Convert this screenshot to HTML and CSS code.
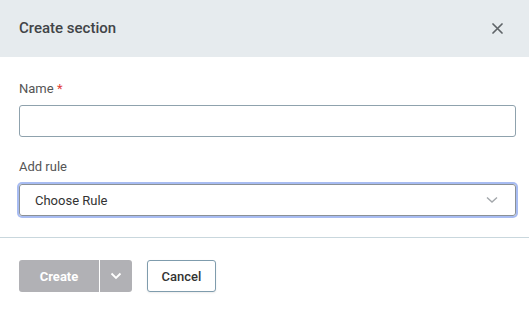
FILE: index.html
```html
<!DOCTYPE html>
<html lang="en">
<head>
    <meta charset="UTF-8">
    <meta name="viewport" content="width=device-width, initial-scale=1.0">
    <title>Create section</title>
    <link rel="stylesheet" href="styles.css">
</head>
<body>
    <div class="modal">
        <div class="modal-header">
            <h2>Create section</h2>
            <button class="close-btn" aria-label="Close">
                <svg width="11" height="11" viewBox="0 0 11 11">
                    <path d="M1 1L10 10M10 1L1 10" stroke="#5f6468" stroke-width="1.7" stroke-linecap="round"/>
                </svg>
            </button>
        </div>
        <div class="modal-body">
            <div class="field">
                <label>Name <span class="req">*</span></label>
                <input type="text" class="text-input">
            </div>
            <div class="field">
                <label>Add rule</label>
                <div class="select focused">
                    <span>Choose Rule</span>
                    <svg width="12" height="8" viewBox="0 0 12 8">
                        <path d="M1 1.5L6 6L11 1.5" fill="none" stroke="#a3a7ab" stroke-width="1.4"/>
                    </svg>
                </div>
            </div>
        </div>
        <div class="modal-footer">
            <div class="split-btn">
                <button class="btn-main">Create</button>
                <button class="btn-caret">
                    <svg width="12" height="8" viewBox="0 0 12 8">
                        <path d="M1.5 1.5L6 6L10.5 1.5" fill="none" stroke="#ffffff" stroke-width="1.8"/>
                    </svg>
                </button>
            </div>
            <button class="btn-cancel">Cancel</button>
        </div>
    </div>
</body>
</html>
```

FILE: styles.css
```css
body {
    margin: 0;
    padding: 0;
    font-family: Roboto, "Liberation Sans", Arial, sans-serif;
    color: #333;
    background: #fff;
}
.modal {
    width: 529px;
}
.modal-header {
    background-color: #e6ebee;
    height: 57px;
    display: flex;
    align-items: center;
    justify-content: space-between;
    padding: 0 19px;
    box-sizing: border-box;
}
.modal-header h2 {
    margin: 0;
    font-size: 15px;
    font-weight: 500;
    color: #414447;
    position: relative;
    top: -1px;
}
.close-btn {
    background: none;
    border: none;
    padding: 0;
    margin-right: 7px;
    display: flex;
    cursor: pointer;
}
.modal-body {
    padding: 24px 13px 21px 19px;
    border-bottom: 1px solid #c9d7dd;
}
.field {
    display: flex;
    flex-direction: column;
    gap: 9px;
    margin-bottom: 22px;
}
.field:last-child {
    margin-bottom: 0;
}
label {
    font-size: 13px;
    color: #555;
    line-height: 15px;
}
.req {
    color: #e0403a;
}
.text-input {
    height: 32px;
    width: 497px;
    box-sizing: border-box;
    border: 1px solid #8fa2ad;
    border-radius: 3px;
    padding: 0 14px;
    font-size: 13px;
    margin: 0;
}
.select {
    height: 32px;
    width: 497px;
    box-sizing: border-box;
    border: 1px solid #8b9196;
    border-radius: 3px;
    padding: 0 17px 0 15px;
    display: flex;
    align-items: center;
    justify-content: space-between;
    font-size: 13px;
    color: #333;
    margin-top: 1px;
}
.select.focused {
    box-shadow: 0 0 0 2px #a8bcf2;
}
.modal-footer {
    padding: 22px 19px;
    display: flex;
    gap: 15px;
}
.split-btn {
    display: flex;
    gap: 1px;
}
.split-btn button {
    height: 32px;
    border: none;
    background-color: #b1b1b5;
    color: #fff;
    font-family: inherit;
    font-size: 13px;
    font-weight: 700;
    cursor: default;
}
.btn-main {
    width: 80px;
    border-radius: 3px 0 0 3px;
}
.btn-caret {
    width: 32px;
    border-radius: 0 3px 3px 0;
    display: flex;
    align-items: center;
    justify-content: center;
    padding: 0;
}
.btn-cancel {
    height: 32px;
    width: 69px;
    background: #fff;
    border: 1px solid #7f9cad;
    border-radius: 3px;
    font-family: inherit;
    font-size: 13px;
    font-weight: 500;
    color: #333;
    box-shadow: 0 1px 2px rgba(0, 0, 0, 0.08);
}
```
